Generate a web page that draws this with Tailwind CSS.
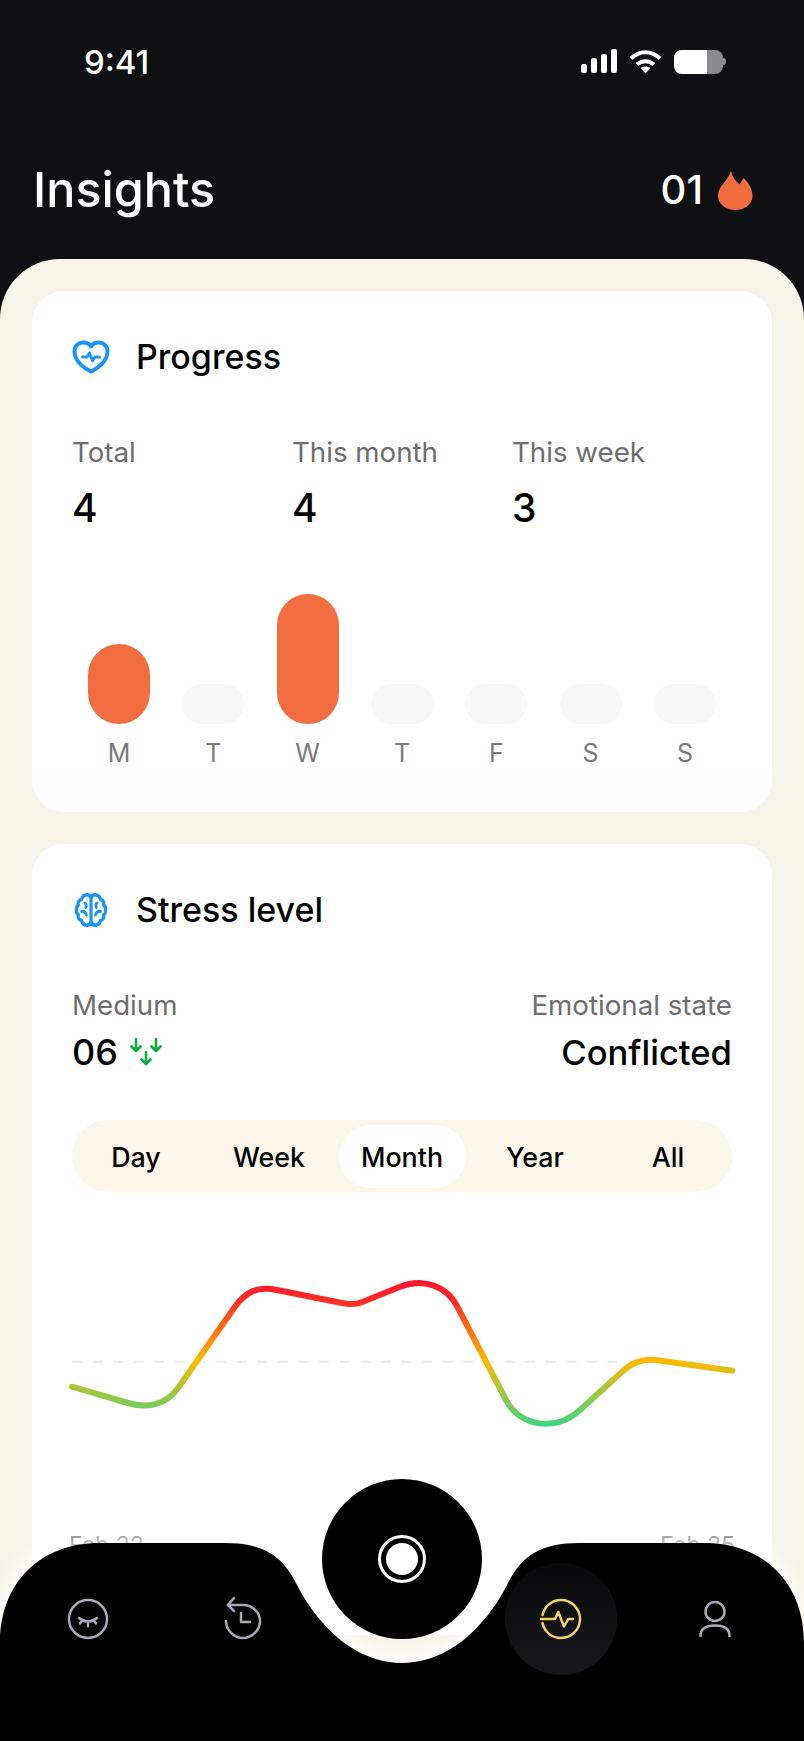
<!DOCTYPE html>
<html>
<head>
<meta charset="utf-8">
<script src="https://cdn.jsdelivr.net/npm/@tailwindcss/browser@4"></script>
</head>
<body class="m-0">
<div class="relative w-[804px] h-[1741px] overflow-hidden bg-[#0f1014] font-[Inter,sans-serif]">
  <!-- header -->
  <header class="h-[259px] text-white">
    <div class="flex items-center justify-between pl-[84px] pr-[78px] pt-[43px] h-[80px]">
      <span class="text-[33px] leading-[36px] font-medium">9:41</span>
      <div class="flex items-center">
        <svg class="mr-[11px]" width="37" height="25" viewBox="0 0 37 25" fill="#fff"><rect x="0" y="15" width="6" height="9" rx="2"/><rect x="10" y="9" width="6" height="15" rx="2"/><rect x="20" y="5" width="6" height="19" rx="2"/><rect x="30" y="0" width="6" height="24" rx="2"/></svg>
        <svg class="mr-[12px]" width="33" height="24" viewBox="0 0 33 24" fill="none" stroke="#fff" stroke-width="4"><path d="M2 8.500C10.500 0 22.500 0 31 8.500"/><path d="M8 14.500C13 10 20 10 25 14.500"/><path d="M16.500 23.500L11.500 18C14.500 16 18.500 16 21.500 18Z" fill="#fff" stroke="none"/></svg>
        <div class="flex items-center">
          <div class="flex w-[49px] h-[24px] rounded-[8px] overflow-hidden bg-[#8c8c8e]"><div class="w-[33px] bg-white"></div></div>
          <div class="w-[3px] h-[7px] rounded-r-[3px] bg-[#8c8c8e]"></div>
        </div>
      </div>
    </div>
    <div class="flex items-center justify-between pl-[33px] pr-[51px] pt-[82px]">
      <h1 class="text-[48.500px] leading-[56px] font-medium">Insights</h1>
      <div class="flex items-center gap-[15px]">
        <span class="text-[40px] leading-[48px] font-medium">01</span>
        <svg width="35" height="39" viewBox="0 0 35 39" fill="#f26d3d"><path d="M13 0C14 5 17 10 21.500 13.500C22.500 12 24 10 25.500 7C31 12 34.500 18 34.500 25C34.500 33 27 39 17.500 39C8 39 0 33 0 25C0 15 10 10 13 0Z"/></svg>
      </div>
    </div>
  </header>

  <!-- sheet -->
  <main class="h-[1482px] rounded-t-[60px] bg-[#f8f3e8] px-8 pt-8 flex flex-col gap-8">
    <!-- progress -->
    <section class="h-[521px] shrink-0 rounded-[32px] bg-gradient-to-b from-white from-90% to-[#fcfcfc] px-10 pt-[49px]">
      <div class="flex items-center gap-[26px] h-[34px]">
        <svg width="38" height="34" viewBox="0 0 38 34" fill="none" stroke="#1a94f5" stroke-width="4" stroke-linecap="round" stroke-linejoin="round"><path d="M19 31.500C14 29 2.500 22 2.500 11.500C2.500 6 6.500 2.500 11 2.500C14.500 2.500 17.500 3.500 19 6.500C20.500 3.500 23.500 2.500 27 2.500C31.500 2.500 35.500 6 35.500 11.500C35.500 22 24 29 19 31.500Z"/><path d="M10.500 17H15L17.500 13L20.500 21L23 17H27.500" stroke-width="3"/></svg>
        <h2 class="text-[34px] leading-[40px] font-medium text-black">Progress</h2>
      </div>
      <div class="grid grid-cols-3 mt-[62px]">
        <div><p class="text-[27.700px] leading-[32px] text-[#6e6e6e]">Total</p><p class="mt-[17px] text-[39px] leading-[46px] font-medium text-black">4</p></div>
        <div><p class="text-[27.700px] leading-[32px] text-[#6e6e6e]">This month</p><p class="mt-[17px] text-[39px] leading-[46px] font-medium text-black">4</p></div>
        <div><p class="text-[27.700px] leading-[32px] text-[#6e6e6e]">This week</p><p class="mt-[17px] text-[39px] leading-[46px] font-medium text-black">3</p></div>
      </div>
      <div class="flex justify-between items-end px-[16px] h-[130px] mt-[63px]">
        <div class="w-[62px] h-[80px] rounded-full bg-[#f26d3f]"></div>
        <div class="w-[62px] h-[40px] rounded-full bg-[#f7f7f7]"></div>
        <div class="w-[62px] h-[130px] rounded-full bg-[#f26d3f]"></div>
        <div class="w-[62px] h-[40px] rounded-full bg-[#f7f7f7]"></div>
        <div class="w-[62px] h-[40px] rounded-full bg-[#f7f7f7]"></div>
        <div class="w-[62px] h-[40px] rounded-full bg-[#f7f7f7]"></div>
        <div class="w-[62px] h-[40px] rounded-full bg-[#f7f7f7]"></div>
      </div>
      <div class="flex justify-between px-[16px] mt-[13px] text-[25px] leading-[32px] text-[#7a7a7a] text-center">
        <span class="w-[62px]">M</span><span class="w-[62px]">T</span><span class="w-[62px]">W</span><span class="w-[62px]">T</span><span class="w-[62px]">F</span><span class="w-[62px]">S</span><span class="w-[62px]">S</span>
      </div>
    </section>

    <!-- stress -->
    <section class="relative h-[791px] shrink-0 rounded-t-[32px] bg-white px-10 pt-[49px]">
      <div class="flex items-center gap-[26px] h-[34px]">
        <svg width="38" height="34" viewBox="0 0 38 34" fill="none" stroke="#1a94f5" stroke-width="3.500" stroke-linecap="round" stroke-linejoin="round"><g transform="translate(1.900 0) scale(0.9 1)"><path d="M19 5C18 2.500 15.500 1.500 13 2C10.500 2.500 9 4 8.500 6.500C5.500 7 4 9.500 5 12C3 13.500 2.500 15.500 3 17C2.500 19 3.500 21 5 22C4 24.500 5.500 27 8.500 27.500C9 30 10.500 31.500 13 32C15.500 32.500 18 31.500 19 29C20 31.500 22.500 32.500 25 32C27.500 31.500 29 30 29.500 27.500C32.500 27 34 24.500 33 22C34.500 21 35.500 19 35 17C35.500 15.500 35 13.500 33 12C34 9.500 32.500 7 29.500 6.500C29 4 27.500 2.500 25 2C22.500 1.500 20 2.500 19 5Z"/><path d="M19 5V29"/><path d="M12.500 10C14 11.500 14 13 13 14.500M8.500 18.500C11 18 13 19 14 22M25.500 10C24 11.500 24 13 25 14.500M29.500 18.500C27 18 25 19 24 22" stroke-width="3"/></g></svg>
        <h2 class="text-[34px] leading-[40px] font-medium text-black">Stress level</h2>
      </div>
      <div class="flex justify-between mt-[62px]">
        <div>
          <p class="text-[27.700px] leading-[32px] text-[#6e6e6e]">Medium</p>
          <div class="flex items-center gap-[12px] mt-[9px]">
            <span class="text-[36px] leading-[44px] font-medium text-black">06</span>
            <svg width="32" height="28" viewBox="0 0 32 28" fill="none" stroke="#0bab3e" stroke-width="2.600" stroke-linecap="round" stroke-linejoin="round"><path d="M6 1V13M1.500 8.500L6 13L10.500 8.500"/><path d="M26 1V13M21.500 8.500L26 13L30.500 8.500"/><path d="M16 14V26M11.500 21.500L16 26L20.500 21.500"/></svg>
          </div>
        </div>
        <div class="text-right">
          <p class="text-[27.700px] leading-[32px] text-[#6e6e6e]">Emotional state</p>
          <p class="mt-[9px] text-[34.600px] leading-[44px] font-medium text-black">Conflicted</p>
        </div>
      </div>
      <div class="flex items-center justify-center h-[72px] mt-[46px] rounded-full bg-[#fcf6ea] text-[26.800px] font-medium text-black">
        <div class="w-[133px] shrink-0 flex justify-center"><span class="w-[127px] h-[63px] pt-[2px] flex items-center justify-center">Day</span></div>
        <div class="w-[133px] shrink-0 flex justify-center"><span class="w-[127px] h-[63px] pt-[2px] flex items-center justify-center">Week</span></div>
        <div class="w-[133px] shrink-0 flex justify-center"><span class="w-[127px] h-[63px] pt-[2px] flex items-center justify-center rounded-full bg-white">Month</span></div>
        <div class="w-[133px] shrink-0 flex justify-center"><span class="w-[127px] h-[63px] pt-[2px] flex items-center justify-center">Year</span></div>
        <div class="w-[133px] shrink-0 flex justify-center"><span class="w-[127px] h-[63px] pt-[2px] flex items-center justify-center">All</span></div>
      </div>
      <svg class="block mt-[58px] overflow-visible" width="660" height="200" viewBox="0 0 660 200" fill="none">
        <defs><linearGradient id="stress" gradientUnits="userSpaceOnUse" x1="0" y1="30" x2="0" y2="176"><stop offset="0" stop-color="#ff1430"/><stop offset="0.15" stop-color="#ff2f25"/><stop offset="0.55" stop-color="#ffb900"/><stop offset="1" stop-color="#3fd484"/></linearGradient></defs>
        <path d="M0 111.700H660" stroke="#e6ebf0" stroke-width="2" stroke-dasharray="10 10.600"/>
        <path d="M0 136.700L56 153C74 158.300 94 156 107 136.700L162 58C174 41 186 36 205 40L263.500 51.700C277 54.400 282 55.400 291 51.700L328 36.700C350 27.800 375 35 386 58L434 150C448 177 484 182 508 160L552 120C562 111 575 108 589 110.700L660.500 120.700" stroke="url(#stress)" stroke-width="6" stroke-linecap="round" stroke-linejoin="round"/>
      </svg>
      <div class="flex justify-between -mx-[3px] mt-[81px] text-[23px] leading-[28px] text-[#5e5e5e]"><span>Feb 22</span><span>Feb 25</span></div>
    </section>
  </main>

  <!-- bottom nav -->
  <nav class="absolute left-0 top-[1543px] w-[804px] h-[198px]">
    <svg class="absolute inset-0 drop-shadow-[0_-6px_14px_rgba(255,255,255,0.95)]" width="804" height="198" viewBox="0 0 804 198" fill="#000"><path d="M0 198V100C0 40 40 0 100 0H225C262 0 282 12 296 40C303 54 312 68 323 80C340 100 368 120 402 120C436 120 464 100 481 80C492 68 501 54 508 40C522 12 542 0 579 0H704C764 0 804 40 804 100V198Z"/></svg>
    <div class="absolute left-[505px] top-[20px] w-[112px] h-[112px] rounded-full bg-gradient-to-b from-[#09090b] to-[#17181c]"></div>
    <svg class="absolute left-[64px] top-[52px]" width="48" height="48" viewBox="0 0 48 48" fill="none" stroke="#a5abb8" stroke-width="2.500" stroke-linecap="round"><circle cx="24" cy="24" r="19"/><path d="M15 23C20 27.500 28 27.500 33 23M18 25.500L16 28.500M24 27V31M30 25.500L32 28.500" stroke-width="2.500"/></svg>
    <svg class="absolute left-[219px] top-[52px]" width="48" height="48" viewBox="0 0 48 48" fill="none" stroke="#a5abb8" stroke-width="2.500" stroke-linecap="round" stroke-linejoin="round"><path d="M9 10H24C33 10 41 17 41 26C41 35 33 43 24 43C15 43 7 35 7 26"/><path d="M15 3L9 10L15 16"/><path d="M22 18V27H31"/></svg>
    <svg class="absolute left-[537px] top-[52px]" width="48" height="48" viewBox="0 0 48 48" fill="none" stroke="#f5d264" stroke-width="2.500" stroke-linecap="round" stroke-linejoin="round"><path d="M5.500 20C7.500 11 15 5 24 5C34.500 5 43 13.500 43 24C43 34.500 34.500 43 24 43C15 43 7.500 37 5.500 28"/><path d="M4 24H18L21.300 17L27 31.500L31.300 24H36"/></svg>
    <svg class="absolute left-[691px] top-[52px]" width="48" height="48" viewBox="0 0 48 48" fill="none" stroke="#a5abb8" stroke-width="2.500" stroke-linecap="round"><circle cx="24" cy="16.500" r="9.500"/><path d="M9.500 41C9.500 34 15 30.500 24 30.500C33 30.500 38.500 34 38.500 41"/></svg>
  </nav>

  <!-- record button -->
  <button class="absolute left-[322px] top-[1479px] w-[160px] h-[160px] rounded-full bg-black flex items-center justify-center">
    <span class="w-[48px] h-[48px] rounded-full border-[3px] border-white flex items-center justify-center"><span class="w-[32px] h-[32px] rounded-full bg-white"></span></span>
  </button>
</div>
</body>
</html>
